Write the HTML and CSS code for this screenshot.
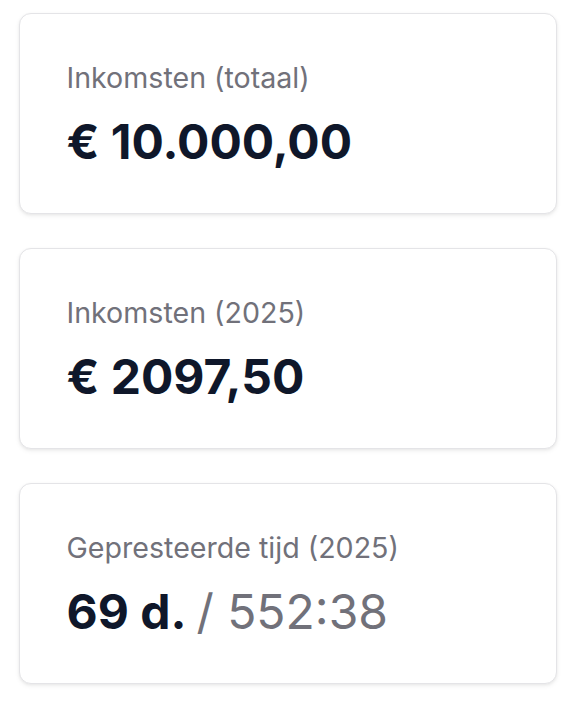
FILE: index.html
```html
<!DOCTYPE html>
<html lang="nl">
<head>
<meta charset="utf-8">
<link rel="stylesheet" href="styles.css">
</head>
<body>
<main class="stats">
  <section class="card">
    <div class="label">Inkomsten (totaal)</div>
    <div class="value">€ 10.000,00</div>
  </section>
  <section class="card">
    <div class="label">Inkomsten (2025)</div>
    <div class="value">€ 2097,50</div>
  </section>
  <section class="card">
    <div class="label">Gepresteerde tijd (2025)</div>
    <div class="value">69 d. <span class="muted">/ 552:38</span></div>
  </section>
</main>
</body>
</html>
```

FILE: styles.css
```css
html, body {
  margin: 0;
  padding: 0;
  background: #ffffff;
}
body {
  font-family: Inter, "Noto Sans", sans-serif;
}
.stats {
  display: flex;
  flex-direction: column;
  gap: 34px;
  padding: 13px 19px;
}
.card {
  background: #fff;
  border: 1.5px solid #e4e4e7;
  border-radius: 12px;
  box-shadow: 0 2px 5px rgba(0,0,0,0.06), 0 1px 3px rgba(0,0,0,0.05);
  padding: 45.5px 46.5px 47px;
  display: flex;
  flex-direction: column;
  gap: 22.5px;
}
.label {
  font-size: 28.6px;
  line-height: 36px;
  color: #71717a;
}
.value {
  font-size: 48px;
  line-height: 48px;
  font-weight: 700;
  color: #0f172a;
}
.muted {
  font-weight: 400;
  color: #71717a;
}
```
